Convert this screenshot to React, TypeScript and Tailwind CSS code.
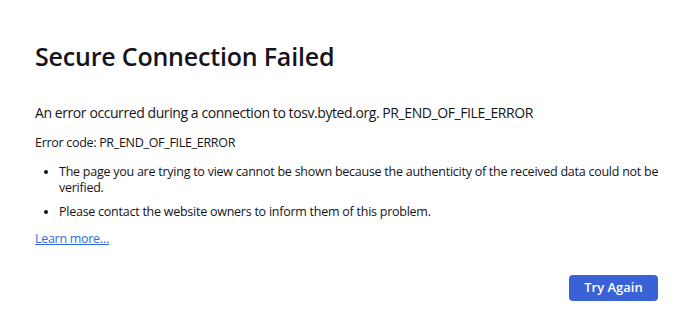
export default function App() {
  return (
    <div
      className="w-[690px] h-[316px] bg-white text-[#15141a] overflow-hidden"
      style={{ fontFamily: '"Open Sans", "Noto Sans", sans-serif' }}
    >
      <div className="pl-[35px] pr-[26px] pt-[39px]">
        <h1 className="text-[25px] font-semibold leading-[34px] tracking-[-0.2px]">
          Secure Connection Failed
        </h1>
        <p className="mt-[30px] text-[14px] leading-[20px] tracking-[-0.42px]">
          An error occurred during a connection to tosv.byted.org. PR_END_OF_FILE_ERROR
        </p>
        <p className="mt-[11px] text-[12.5px] leading-[18px] tracking-[-0.3px]">
          Error code: PR_END_OF_FILE_ERROR
        </p>
        <ul className="mt-[12px] list-disc pl-[24px] text-[12.5px] leading-[16px] tracking-[-0.25px] space-y-[8px]">
          <li>
            The page you are trying to view cannot be shown because the authenticity of the received data could not be
            verified.
          </li>
          <li>Please contact the website owners to inform them of this problem.</li>
        </ul>
        <a href="#" className="mt-[10px] inline-block text-[12.5px] leading-[18px] tracking-[-0.3px] text-[#2f6bdc] underline">
          Learn more…
        </a>
        <div className="flex justify-end mt-[26px] pr-[6px]">
          <button className="w-[89px] h-[26px] rounded-[4px] bg-[#3a62d7] text-white text-[13px] font-semibold">
            Try Again
          </button>
        </div>
      </div>
    </div>
  );
}
